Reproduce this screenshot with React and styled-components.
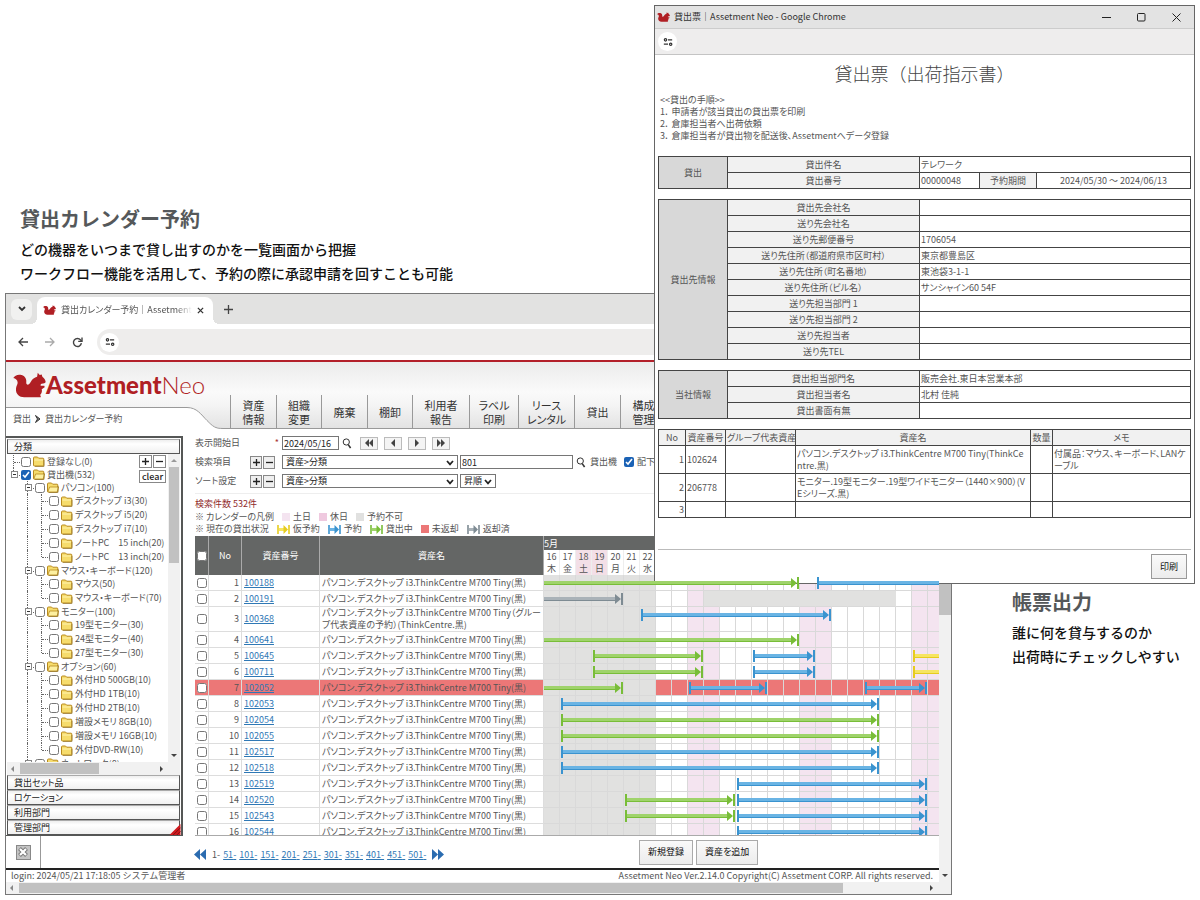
import React from "react";
import styled, { createGlobalStyle, css } from "styled-components";

const TREE = [
  { name: "登録なし(0)", depth: 0 },
  { name: "貸出機(532)", depth: 0, branch: true, checked: true, last: true },
  { name: "パソコン(100)", depth: 1, branch: true },
  { name: "デスクトップ i3(30)", depth: 2 },
  { name: "デスクトップ i5(20)", depth: 2 },
  { name: "デスクトップ i7(10)", depth: 2 },
  { name: "ノートPC　15 inch(20)", depth: 2 },
  { name: "ノートPC　13 inch(20)", depth: 2, last: true },
  { name: "マウス・キーボード(120)", depth: 1, branch: true },
  { name: "マウス(50)", depth: 2 },
  { name: "マウス・キーボード(70)", depth: 2, last: true },
  { name: "モニター(100)", depth: 1, branch: true },
  { name: "19型モニター(30)", depth: 2 },
  { name: "24型モニター(40)", depth: 2 },
  { name: "27型モニター(30)", depth: 2, last: true },
  { name: "オプション(60)", depth: 1, branch: true },
  { name: "外付HD 500GB(10)", depth: 2 },
  { name: "外付HD 1TB(10)", depth: 2 },
  { name: "外付HD 2TB(10)", depth: 2 },
  { name: "増設メモリ 8GB(10)", depth: 2 },
  { name: "増設メモリ 16GB(10)", depth: 2 },
  { name: "外付DVD-RW(10)", depth: 2, last: true },
  { name: "ネットワーク(8)", depth: 1, branch: true },
];

const MENUS = [
  { lines: ["資産", "情報"], width: 46 },
  { lines: ["組織", "変更"], width: 45 },
  { lines: ["廃棄"], width: 46 },
  { lines: ["棚卸"], width: 45 },
  { lines: ["利用者", "報告"], width: 57 },
  { lines: ["ラベル", "印刷"], width: 49 },
  { lines: ["リース", "レンタル"], width: 56 },
  { lines: ["貸出"], width: 46 },
  { lines: ["構成", "管理"], width: 46 },
];

const DAYS = Array.from({ length: 25 }, (_, i) => ({
  date: i < 16 ? 16 + i : i - 15,
  week: "木金土日月火水"[i % 7],
  weekend: i % 7 === 2 || i % 7 === 3,
  past: i < 7,
}));

const ASSET = "パソコン.デスクトップ i3.ThinkCentre M700 Tiny(黒)";

// bars: [kind, first day, last day], days counted from the start of the calendar
const ROWS = [
  { id: "100188", bars: [["lent", -1, 16], ["booked", 17, 99]] },
  { id: "100191", bars: [["returned", -1, 5]], blocked: [10, 22] },
  {
    id: "100368",
    name: "パソコン.デスクトップ i3.ThinkCentre M700 Tiny（グループ代表資産の予約）(ThinkCentre.黒)",
    tall: true,
    bars: [["booked", 6, 18]],
  },
  { id: "100641", bars: [["lent", -1, 16]] },
  { id: "100645", bars: [["lent", 3, 10], ["booked", 13, 17], ["tentative", 23, 99]] },
  { id: "100711", bars: [["lent", 3, 10], ["booked", 13, 17], ["tentative", 23, 99]] },
  { id: "102052", late: true, bars: [["lent", -1, 5], ["booked", 9, 14], ["booked", 20, 24]] },
  { id: "102053", bars: [["booked", 1, 21]] },
  { id: "102054", bars: [["lent", 1, 21]] },
  { id: "102055", bars: [["lent", 1, 21]] },
  { id: "102517", bars: [["booked", 1, 21]] },
  { id: "102518", bars: [["booked", 1, 21]] },
  { id: "102519", bars: [["booked", 12, 24]] },
  { id: "102520", bars: [["lent", 5, 12], ["booked", 12, 24]] },
  { id: "102543", bars: [["lent", 5, 12], ["booked", 12, 24]] },
  { id: "102544", bars: [["booked", 12, 24]] },
];

const COLORS = {
  booked: ["#3a93cf", "#6ab4e4"],
  lent: ["#78bd38", "#9fd36b"],
  tentative: ["#e6cc1e", "#f6e561"],
  returned: ["#7e8b93", "#a9b2b8"],
};

const SHIP_TO = [
  ["貸出先会社名", ""],
  ["送り先会社名", ""],
  ["送り先郵便番号", "1706054"],
  ["送り先住所（都道府県市区町村）", "東京都豊島区"],
  ["送り先住所（町名番地）", "東池袋3-1-1"],
  ["送り先住所（ビル名）", "サンシャイン60 54F"],
  ["送り先担当部門 1", ""],
  ["送り先担当部門 2", ""],
  ["送り先担当者", ""],
  ["送り先TEL", ""],
];

const OUR_SIDE = [
  ["貸出担当部門名", "販売会社.東日本営業本部"],
  ["貸出担当者名", "北村 佳純"],
  ["貸出書面有無", ""],
];

function Squirrel() {
  return (
    <svg viewBox="0 0 100 76" width="100%" height="100%" aria-hidden="true">
      <path
        fill="#b01f24"
        d="M1 17C5 9 15 5 26 8C38 12 42 22 40 33C43 40 49 37 54 28C59 19 65 16 73 13L75 1L81 8L87 6L89 13C95 17 99 24 99 29C98 33 93 34 87 34C84 35 83 37 84 40L95 40L96 45L87 51C89 57 87 64 82 68L84 71V75H34C19 75 8 65 9 50C9 41 15 37 14 30C13 22 8 19 1 17Z"
      />
    </svg>
  );
}

function SettingsGlyph() {
  return (
    <svg viewBox="0 0 12 12" width="10" height="10" fill="none" stroke="#333" strokeWidth="1.5" aria-hidden="true">
      <circle cx="3" cy="3.4" r="1.4" />
      <path d="M6 3.4h5M1 8.6h5" />
      <circle cx="9.2" cy="8.6" r="1.4" />
    </svg>
  );
}

function Folder({ open }) {
  return (
    <svg viewBox="0 0 12 11" width="12" height="11" aria-hidden="true">
      <path d="M.5 2Q.5 1 1.5 1h3l1.2 1.2h4.3q.8 0 .8.8v6.2q0 .8-.8.8H1.4Q.5 10 .5 9z" fill="#f6dc6c" stroke="#b98a1e" />
      {open && <path d="M.8 10L2.6 5h9l-1.400 5z" fill="#fdf0a0" stroke="#b98a1e" strokeWidth=".8" />}
      {!open && <path d="M1.4 4h8.6" stroke="#fff3b0" />}
      <path d="M2 10.5h9V4" stroke="#8a6a1d" strokeOpacity=".6" fill="none" />
    </svg>
  );
}

function SearchGlyph() {
  return (
    <svg viewBox="0 0 10 11" width="10" height="11" fill="none" stroke="#333" aria-hidden="true">
      <circle cx="4.3" cy="4" r="3.1" />
      <path d="M6.2 6.6L8.6 10" strokeWidth="1.6" />
    </svg>
  );
}

function Arrow({ points, width = 8, height = 8, color = "#444" }) {
  return (
    <svg viewBox={`0 0 ${width} ${height}`} width={width} height={height} fill={color} aria-hidden="true">
      <path d={points} />
    </svg>
  );
}

function Chevron() {
  return (
    <ChevronIcon viewBox="0 0 8 6" aria-hidden="true">
      <path d="M1 1l3 3.4L7 1" fill="none" stroke="#222" strokeWidth="1.7" />
    </ChevronIcon>
  );
}

function Span({ kind, from, to }) {
  const [dark, light] = COLORS[kind];
  const left = from < 0 ? 0 : from * 16 + 1;
  return (
    <Bar style={{ left, width: to * 16 - 1 - left }}>
      {from >= 0 && <Cap $dark={dark} />}
      <Shaft $dark={dark} $light={light} />
      <Arrow points="M0 0l6 5-6 5z" width={6} height={10} color={dark} />
      <Cap $dark={dark} />
    </Bar>
  );
}

function LegendArrow({ kind, children }) {
  const [dark, light] = COLORS[kind];
  return (
    <LegendItem>
      <svg viewBox="0 0 13 9" width="13" height="9" aria-hidden="true">
        <path d="M1 0v9M12 0v9" stroke={dark} strokeWidth="1.6" />
        <path d="M2 4.5h6" stroke={light} strokeWidth="3" />
        <path d="M6.5 0l4.5 4.5L6.5 9z" fill={dark} />
      </svg>
      {children}
    </LegendItem>
  );
}

function TreeRow({ name, depth, branch, checked, last }) {
  return (
    <Branch $branch={branch || depth === 0}>
      {depth > 0 && <Guide />}
      {depth > 1 && <Guide $line />}
      <Guide $line $tee $last={last}>
        {branch && <Toggle type="button" aria-label={`${name} 開閉`} />}
      </Guide>
      <Check type="checkbox" id={`t-${name}`} defaultChecked={checked} />
      <Folder open={branch} />
      <label htmlFor={`t-${name}`}>{name}</label>
    </Branch>
  );
}

function Calendar({ row }) {
  return DAYS.map((day, i) => {
    const blocked = row.blocked && i >= row.blocked[0] && i < row.blocked[1];
    return (
      <Day key={i} $past={day.past || blocked} $weekend={day.weekend} $late={row.late} $plain={blocked}>
        {i === 0 && row.bars.map(([kind, from, to]) => <Span key={from} kind={kind} from={from} to={to} />)}
      </Day>
    );
  });
}

function AssetTable() {
  return (
    <TableArea>
      <Assets>
        <colgroup>
          <col width="14" />
          <col width="33" />
          <col width="78" />
          <col width="224" />
          {DAYS.map((_, i) => (
            <col key={i} width="16" />
          ))}
        </colgroup>
        <thead>
          <tr>
            <Head rowSpan="2">
              <Check type="checkbox" aria-label="すべて選択" />
            </Head>
            <Head rowSpan="2">No</Head>
            <Head rowSpan="2">資産番号</Head>
            <Head rowSpan="2">資産名</Head>
            <Month colSpan="25">5月</Month>
          </tr>
          <tr>
            {DAYS.map(({ date, week, weekend }, i) => (
              <DayHead key={i} $weekend={weekend}>
                {date}
                <br />
                {week}
              </DayHead>
            ))}
          </tr>
        </thead>
        <tbody>
          {ROWS.map((row, i) => (
            <AssetRow key={row.id} $late={row.late} $tall={row.tall}>
              <Cell>
                <Check type="checkbox" aria-label={row.id} />
              </Cell>
              <Cell $right>{i + 1}</Cell>
              <Cell>
                <Link href="#">{row.id}</Link>
              </Cell>
              <Cell>{row.name || ASSET}</Cell>
              <Calendar row={row} />
            </AssetRow>
          ))}
        </tbody>
      </Assets>
    </TableArea>
  );
}

function Filters() {
  return (
    <FilterForm>
      <FilterRow>
        <FilterLabel htmlFor="start">表示開始日</FilterLabel>
        <Required>*</Required>
        <Field id="start" $width={57} defaultValue="2024/05/16" />
        <IconButton type="button" aria-label="日付検索">
          <SearchGlyph />
        </IconButton>
        <Steps>
          <Step type="button" aria-label="最初">
            <Arrow points="M4 0v8L0 4zM8 0v8L4 4z" />
          </Step>
          <Step type="button" aria-label="前">
            <Arrow points="M6 0v8L2 4z" />
          </Step>
          <Step type="button" aria-label="次">
            <Arrow points="M2 0v8l4-4z" />
          </Step>
          <Step type="button" aria-label="最後">
            <Arrow points="M0 0v8l4-4zM4 0v8l4-4z" />
          </Step>
        </Steps>
      </FilterRow>
      <FilterRow>
        <FilterLabel htmlFor="item">検索項目</FilterLabel>
        <PlusMinus />
        <Picker $width={176}>
          <select id="item">
            <option>資産&gt;分類</option>
          </select>
          <Chevron />
        </Picker>
        <Field aria-label="検索値" $width={113} $joined defaultValue="801" />
        <IconButton type="button" aria-label="検索">
          <SearchGlyph />
        </IconButton>
        <span>貸出機</span>
        <SubLabel>
          <Check type="checkbox" defaultChecked />
          配下も含む
        </SubLabel>
      </FilterRow>
      <FilterRow>
        <FilterLabel htmlFor="sort">ソート設定</FilterLabel>
        <PlusMinus />
        <Picker $width={176}>
          <select id="sort">
            <option>資産&gt;分類</option>
          </select>
          <Chevron />
        </Picker>
        <Picker $width={36} $joined>
          <select aria-label="並び順">
            <option>昇順</option>
          </select>
          <Chevron />
        </Picker>
      </FilterRow>
    </FilterForm>
  );
}

function PlusMinus() {
  return (
    <Signs>
      <Sign type="button" aria-label="追加">
        <svg viewBox="0 0 8 8" aria-hidden="true">
          <path d="M4 0v8M0 4h8" />
        </svg>
      </Sign>
      <Sign type="button" aria-label="削除">
        <svg viewBox="0 0 8 8" aria-hidden="true">
          <path d="M0 4h8" />
        </svg>
      </Sign>
    </Signs>
  );
}

function Sidebar() {
  return (
    <SidePanel>
      <Accordion type="button">分類</Accordion>
      <TreeBox>
        <TreeMain>
          <Tree>
            {TREE.map((node) => (
              <TreeRow key={node.name} {...node} />
            ))}
          </Tree>
          <TreeTools>
            <PlusMinus />
            <Clear type="button">clear</Clear>
          </TreeTools>
          <TreeScroll>
            <Arrow points="M1 6h6L4 3z" color="#999" />
            <Thumb $height={96} />
            <Arrow points="M1 2h6L4 5z" />
          </TreeScroll>
        </TreeMain>
        <ScrollX>
          <Arrow points="M5 1v6L2 4z" color="#888" />
          <Thumb $width={79} />
          <Arrow points="M3 1v6l3-3z" />
        </ScrollX>
      </TreeBox>
      <Accordion type="button">貸出セット品</Accordion>
      <Accordion type="button">ロケーション</Accordion>
      <Accordion type="button">利用部門</Accordion>
      <Accordion type="button">管理部門</Accordion>
      <Corner viewBox="0 0 12 12" aria-hidden="true">
        <path d="M12 0v12H0z" fill="#d01a1f" />
        <path d="M4 12l8-8M8 12l4-4" stroke="#7d0d10" />
      </Corner>
    </SidePanel>
  );
}

function MainWindow() {
  return (
    <Browser>
      <TabStrip>
        <TabMenu type="button" aria-label="タブを検索">
          <svg viewBox="0 0 8 6" width="8" height="6" aria-hidden="true">
            <path d="M1 1l3 3 3-3" fill="none" stroke="#333" strokeWidth="1.8" />
          </svg>
        </TabMenu>
        <Tab>
          <Favicon>
            <Squirrel />
          </Favicon>
          <TabTitle>貸出カレンダー予約｜Assetment Neo</TabTitle>
          <Plain type="button" aria-label="タブを閉じる">
            <svg viewBox="0 0 8 8" width="7" height="7" aria-hidden="true">
              <path d="M1 1l6 6M7 1L1 7" stroke="#333" strokeWidth="1.5" />
            </svg>
          </Plain>
        </Tab>
        <Plain type="button" aria-label="新しいタブ">
          <svg viewBox="0 0 9 9" width="9" height="9" aria-hidden="true">
            <path d="M4.5 0v9M0 4.5h9" stroke="#444" strokeWidth="1.3" />
          </svg>
        </Plain>
      </TabStrip>
      <Toolbar>
        <Plain type="button" aria-label="戻る">
          <svg viewBox="0 0 10 10" width="10" height="10" fill="none" stroke="#444" strokeWidth="1.3" aria-hidden="true">
            <path d="M10 5H1M5 1L1 5l4 4" />
          </svg>
        </Plain>
        <Plain type="button" aria-label="進む">
          <svg viewBox="0 0 10 10" width="10" height="10" fill="none" stroke="#aaa" strokeWidth="1.3" aria-hidden="true">
            <path d="M0 5h9M5 1l4 4-4 4" />
          </svg>
        </Plain>
        <Plain type="button" aria-label="再読み込み">
          <svg viewBox="0 0 11 11" width="11" height="11" fill="none" stroke="#444" strokeWidth="1.4" aria-hidden="true">
            <path d="M9.4 6.2A4 4 0 1 1 8.6 3L9.8 4.2" />
            <path d="M10 .6v3.8H6.2" />
          </svg>
        </Plain>
        <Address>
          <Round>
            <SettingsGlyph />
          </Round>
        </Address>
      </Toolbar>
      <Viewport>
        <Site>
          <Banner>
            <BannerLeft>
              <Logo>
                <LogoMark>
                  <Squirrel />
                </LogoMark>
                <b>Assetment</b>
                <i>Neo</i>
              </Logo>
              <Crumbs>
                貸出
                <svg viewBox="0 0 6 8" width="6" height="8" aria-hidden="true">
                  <path d="M.5 .5L5 4L.5 7.500L2.5 4z" fill="#888" stroke="#333" />
                </svg>
                貸出カレンダー予約
              </Crumbs>
            </BannerLeft>
            <Curve viewBox="0 0 40 22" preserveAspectRatio="none" aria-hidden="true">
              <path d="M0 22V0c10 0 14 7 20 13s8 8 16 8h4v1z" fill="#fff" />
              <path d="M0 .5c10 0 14 7 20 13s8 8 16 8h4" fill="none" stroke="#999" />
            </Curve>
            <Menu>
              {MENUS.map(({ lines, width }) => (
                <MenuItem key={lines[0]} href="#" $width={width}>
                  {lines.map((line) => (
                    <span key={line}>{line}</span>
                  ))}
                </MenuItem>
              ))}
            </Menu>
          </Banner>
          <Body>
            <Sidebar />
            <Pane>
              <Filters />
              <Legends>
                <Count>検索件数 532件</Count>
                <LegendLine>
                  <span>※ カレンダーの凡例</span>
                  <LegendItem>
                    <Swatch $color="#f4e4f0" />
                    土日
                  </LegendItem>
                  <LegendItem>
                    <Swatch $color="#efc9df" />
                    休日
                  </LegendItem>
                  <LegendItem>
                    <Swatch $color="#e1e1e0" />
                    予約不可
                  </LegendItem>
                </LegendLine>
                <LegendLine>
                  <span>※ 現在の貸出状況</span>
                  <LegendArrow kind="tentative">仮予約</LegendArrow>
                  <LegendArrow kind="booked">予約</LegendArrow>
                  <LegendArrow kind="lent">貸出中</LegendArrow>
                  <LegendItem>
                    <Swatch $color="#ec7777" />
                    未返却
                  </LegendItem>
                  <LegendArrow kind="returned">返却済</LegendArrow>
                </LegendLine>
              </Legends>
              <AssetTable />
            </Pane>
          </Body>
          <Actions>
            <CloseBox>
              <CloseButton type="button" aria-label="閉じる">
                <svg viewBox="0 0 10 10" width="10" height="10" aria-hidden="true">
                  <path d="M1.500 1.500l7 7M8.500 1.500L1.500 8.500" stroke="#777" strokeWidth="4" />
                  <path d="M2 2l6 6M8 2L2 8" stroke="#fff" strokeWidth="2.200" />
                </svg>
              </CloseButton>
            </CloseBox>
            <Pager aria-label="ページ">
              <Arrow points="M6 0v11L0 5.5zM12 0v11L6 5.5z" width={12} height={11} color="#2b6cb0" />
              <span>1-</span>
              {[51, 101, 151, 201, 251, 301, 351, 401, 451, 501].map((n) => (
                <Link key={n} href="#">
                  {n}-
                </Link>
              ))}
              <Arrow points="M0 0v11l6-5.5zM6 0v11l6-5.5z" width={12} height={11} color="#2b6cb0" />
            </Pager>
            <Buttons>
              <Push type="button">新規登録</Push>
              <Push type="button">資産を追加</Push>
            </Buttons>
          </Actions>
          <Status>
            <span>login: 2024/05/21 17:18:05 システム管理者</span>
            <span>Assetment Neo Ver.2.14.0 Copyright(C) Assetment CORP. All rights reserved.</span>
          </Status>
        </Site>
        <ScrollY>
          <Thumb $height={253} />
          <Arrow points="M1 2h6L4 5z" />
        </ScrollY>
      </Viewport>
      <ScrollX $wide>
        <Arrow points="M5 1v6L2 4z" color="#888" />
        <Thumb $width={824} />
        <Arrow points="M3 1v6l3-3z" />
      </ScrollX>
    </Browser>
  );
}

function InfoTable({ title, rows }) {
  return (
    <Sheet>
      <colgroup>
        <col width="69" />
        <col width="192" />
        <col />
      </colgroup>
      <tbody>
        {rows.map(([label, value], i) => (
          <tr key={label}>
            {i === 0 && (
              <GroupHead rowSpan={rows.length} scope="rowgroup">
                {title}
              </GroupHead>
            )}
            <LabelHead scope="row">{label}</LabelHead>
            <td>{value}</td>
          </tr>
        ))}
      </tbody>
    </Sheet>
  );
}

function SlipWindow() {
  return (
    <Popup>
      <TitleBar>
        <Favicon>
          <Squirrel />
        </Favicon>
        <span>貸出票｜Assetment Neo - Google Chrome</span>
        <Controls>
          <Plain type="button" aria-label="最小化">
            <svg viewBox="0 0 9 9" width="9" height="9" stroke="#222" aria-hidden="true">
              <path d="M0 4.5h9" />
            </svg>
          </Plain>
          <Plain type="button" aria-label="最大化">
            <svg viewBox="0 0 9 9" width="9" height="9" stroke="#222" fill="none" aria-hidden="true">
              <rect x=".5" y=".5" width="7.5" height="7.5" rx="1" />
            </svg>
          </Plain>
          <Plain type="button" aria-label="閉じる">
            <svg viewBox="0 0 9 9" width="9" height="9" stroke="#222" aria-hidden="true">
              <path d="M.5.5l8 8M8.5.5l-8 8" />
            </svg>
          </Plain>
        </Controls>
      </TitleBar>
      <SubBar>
        <Round>
          <SettingsGlyph />
        </Round>
      </SubBar>
      <Slip>
        <SlipTitle>貸出票（出荷指示書）</SlipTitle>
        <Guidance>
          &lt;&lt;貸出の手順&gt;&gt;
          <br />
          1． 申請者が該当貸出の貸出票を印刷
          <br />
          2． 倉庫担当者へ出荷依頼
          <br />
          3． 倉庫担当者が貸出物を配送後、Assetmentへデータ登録
        </Guidance>
        <Sheet>
          <colgroup>
            <col width="69" />
            <col width="192" />
            <col width="60" />
            <col width="57" />
            <col />
          </colgroup>
          <tbody>
            <tr>
              <GroupHead rowSpan="2" scope="rowgroup">
                貸出
              </GroupHead>
              <LabelHead scope="row">貸出件名</LabelHead>
              <td colSpan="3">テレワーク</td>
            </tr>
            <tr>
              <LabelHead scope="row">貸出番号</LabelHead>
              <td>00000048</td>
              <LabelHead scope="row">予約期間</LabelHead>
              <Centered>2024/05/30 ～ 2024/06/13</Centered>
            </tr>
          </tbody>
        </Sheet>
        <InfoTable title="貸出先情報" rows={SHIP_TO} />
        <InfoTable title="当社情報" rows={OUR_SIDE} />
        <Sheet>
          <colgroup>
            <col width="27" />
            <col width="40" />
            <col width="70" />
            <col />
            <col width="22" />
            <col width="138" />
          </colgroup>
          <thead>
            <tr>
              {["No", "資産番号", "グループ代表資産", "資産名", "数量", "メモ"].map((name) => (
                <LabelHead key={name} scope="col">
                  {name}
                </LabelHead>
              ))}
            </tr>
          </thead>
          <tbody>
            <tr>
              <Numeric>1</Numeric>
              <td>102624</td>
              <td />
              <Wrapping>パソコン.デスクトップ i3.ThinkCentre M700 Tiny(ThinkCentre.黒)</Wrapping>
              <td />
              <Wrapping>付属品：マウス、キーボード、LANケーブル</Wrapping>
            </tr>
            <tr>
              <Numeric>2</Numeric>
              <td>206778</td>
              <td />
              <Wrapping>モニター.19型モニター.19型ワイドモニター（1440×900）(VEシリーズ.黒)</Wrapping>
              <td />
              <td />
            </tr>
            <tr>
              <Numeric>3</Numeric>
              <td />
              <td />
              <td />
              <td />
              <td />
            </tr>
          </tbody>
        </Sheet>
        <SlipFooter>
          <Push type="button">印刷</Push>
        </SlipFooter>
      </Slip>
    </Popup>
  );
}

export default function App() {
  return (
    <>
      <GlobalStyle />
      <Page>
        <Feature>
          <Intro>
            <Heading>貸出カレンダー予約</Heading>
            <p>
              どの機器をいつまで貸し出すのかを一覧画面から把握
              <br />
              ワークフロー機能を活用して、予約の際に承認申請を回すことも可能
            </p>
          </Intro>
          <MainWindow />
        </Feature>
        <Aside>
          <Heading>帳票出力</Heading>
          <p>
            誰に何を貸与するのか
            <br />
            出荷時にチェックしやすい
          </p>
        </Aside>
        <SlipWindow />
      </Page>
    </>
  );
}

const GlobalStyle = createGlobalStyle`
  * {
    box-sizing: border-box;
  }

  body {
    margin: 0;
    background: #fff;
    color: #555;
    font-family: "Noto Sans CJK JP", "Open Sans", sans-serif;
    font-size: 9px;
    line-height: 12px;
  }

  button, input, select {
    font: inherit;
    color: inherit;
    margin: 0;
    padding: 0;
  }

  svg {
    display: block;
    flex: none;
  }

  p {
    margin: 0;
  }
`;

const Page = styled.main`
  position: relative;
  display: grid;
  grid-template-columns: minmax(0, 1fr) 188px;
  column-gap: 60px;
  height: 100vh;
  min-height: 700px;
  overflow: hidden;
`;

const Feature = styled.section`
  display: flex;
  flex-direction: column;
  min-height: 0;
  padding: 0 0 5px 5px;
`;

const Intro = styled.div`
  padding: 204px 0 8px 15px;
  color: #111;
  font-size: 14px;
  font-weight: 500;
  line-height: 24px;
`;

const Aside = styled.section`
  padding-top: 587px;
  color: #111;
  font-size: 14px;
  font-weight: 500;
  line-height: 24px;
  white-space: nowrap;
`;

const Heading = styled.h2`
  margin: 0 0 3px;
  color: #55585a;
  font-size: 20px;
  font-weight: 700;
  line-height: 30px;
`;

/* windows */

const Browser = styled.div`
  flex: 1;
  display: flex;
  flex-direction: column;
  min-height: 0;
  border: 1px solid #777;
  background: #fff;
  overflow: hidden;
`;

const Popup = styled.div`
  position: absolute;
  top: 5px;
  right: 5px;
  width: 541px;
  display: flex;
  flex-direction: column;
  border: 1px solid #666;
  background: #fff;
`;

const Plain = styled.button`
  border: 0;
  background: none;
`;

const TabStrip = styled.div`
  display: flex;
  align-items: center;
  height: 30px;
  padding-left: 5px;
  background: #e2e2e1;

  > ${Plain} {
    margin-left: 11px;
  }
`;

const TabMenu = styled.button`
  display: grid;
  place-items: center;
  width: 21px;
  height: 21px;
  margin-right: 5px;
  border: 0;
  border-radius: 6px;
  background: #f1f1f0;
`;

const Tab = styled.div`
  position: relative;
  display: flex;
  align-items: center;
  align-self: flex-end;
  gap: 5px;
  width: 176px;
  height: 27px;
  padding: 0 9px 1px 6px;
  border-radius: 8px 8px 0 0;
  background: #fff;

  &::before,
  &::after {
    content: "";
    position: absolute;
    bottom: 0;
    width: 6px;
    height: 6px;
  }

  &::before {
    right: 100%;
    background: radial-gradient(circle at 0 0, transparent 6px, #fff 6px);
  }

  &::after {
    left: 100%;
    background: radial-gradient(circle at 100% 0, transparent 6px, #fff 6px);
  }
`;

const Favicon = styled.span`
  width: 13px;
  height: 10px;
`;

const TabTitle = styled.span`
  flex: 1;
  overflow: hidden;
  white-space: nowrap;
  font-feature-settings: "palt";
  mask-image: linear-gradient(to right, #000 88%, transparent);
`;

const Toolbar = styled.div`
  display: flex;
  align-items: center;
  gap: 17px;
  height: 36px;
  padding-left: 12px;
`;

const Address = styled.div`
  flex: 1;
  display: flex;
  align-items: center;
  height: 26px;
  margin-left: -3px;
  padding-left: 3px;
  border-radius: 13px 0 0 13px;
  background: #eeedec;
`;

const Round = styled.span`
  display: grid;
  place-items: center;
  width: 19px;
  height: 19px;
  border-radius: 50%;
  background: #fff;
`;

const Viewport = styled.div`
  flex: 1;
  display: flex;
  min-height: 0;
  border-top: 2px solid #b3202a;
`;

const Site = styled.div`
  flex: 1;
  display: flex;
  flex-direction: column;
  min-width: 0;
  overflow: hidden;
`;

const Thumb = styled.span`
  flex: none;
  width: ${(props) => (props.$width ? `${props.$width}px` : "100%")};
  height: ${(props) => (props.$height ? `${props.$height}px` : "100%")};
  background: #c1c1c1;
`;

const ScrollY = styled.div`
  display: flex;
  flex-direction: column;
  align-items: center;
  justify-content: space-between;
  width: 12px;
  padding-bottom: 2px;
  background: #f1f1f1;
`;

const ScrollX = styled.div`
  display: flex;
  align-items: center;
  gap: 3px;
  height: ${(props) => (props.$wide ? 12 : 13)}px;
  padding: 1px ${(props) => (props.$wide ? 16 : 15)}px 1px 2px;
  background: #f1f1f1;

  > :last-child {
    margin-left: auto;
  }
`;

/* site banner */

const Banner = styled.header`
  flex: none;
  display: flex;
  align-items: flex-end;
  height: 67px;
  background: linear-gradient(#ebebeb, #fafafa 45%, #f4f4f4 65%, #e2e2e2);
`;

const BannerLeft = styled.div`
  display: flex;
  flex-direction: column;
  align-self: stretch;
  width: 181px;
`;

const Logo = styled.div`
  flex: 1;
  display: flex;
  align-items: center;
  padding-left: 7px;
  color: #b01f24;
  font-family: Lato, "Open Sans", sans-serif;
  font-size: 24px;
  line-height: 24px;
  white-space: nowrap;

  b {
    font-weight: 900;
  }

  i {
    font-style: normal;
    font-weight: 300;
  }
`;

const LogoMark = styled.span`
  flex: none;
  width: 33px;
  height: 26px;
`;

const Crumbs = styled.div`
  display: flex;
  align-items: center;
  gap: 4px;
  height: 22px;
  padding-left: 7px;
  border-top: 1px solid #999;
  background: #fff;
  font-feature-settings: "palt";
`;

const Curve = styled.svg`
  width: 40px;
  height: 22px;
`;

const Menu = styled.nav`
  flex: 1;
  display: flex;
  align-self: stretch;
  align-items: flex-end;
  padding-left: 3px;
  border-bottom: 1px solid #999;
`;

const MenuItem = styled.a`
  flex: none;
  display: flex;
  flex-direction: column;
  align-items: center;
  justify-content: center;
  width: ${(props) => props.$width}px;
  height: 33px;
  border-left: 1px solid #999;
  color: #333;
  font-size: 11px;
  font-feature-settings: "palt";
  line-height: 14px;
  text-decoration: none;
`;

const Body = styled.div`
  flex: 1;
  display: flex;
  min-height: 0;
`;

/* controls */

const Check = styled.input`
  flex: none;
  width: 10px;
  height: 10px;
  margin: 0;
  accent-color: #1b62b5;
`;

const Signs = styled.span`
  display: flex;
  gap: 1px;
`;

const Sign = styled.button`
  display: grid;
  place-items: center;
  width: 12px;
  height: 13px;
  border: 1px solid #888;
  background: #efefef;

  svg {
    width: 7px;
    height: 7px;
    stroke: #222;
    stroke-width: 1.5;
  }
`;

const Push = styled.button`
  height: 25px;
  padding: 0 8px;
  border: 1px solid #aaa;
  background: linear-gradient(#fafafa, #ececec);
  color: #111;
  font-feature-settings: "palt";
`;

const Link = styled.a`
  color: #2f78b5;
`;

const ChevronIcon = styled.svg`
  position: absolute;
  top: 4px;
  right: 3px;
  width: 8px;
  height: 6px;
  pointer-events: none;
`;

/* sidebar */

const SidePanel = styled.aside`
  position: relative;
  flex: none;
  display: flex;
  flex-direction: column;
  width: 177px;
  margin-top: 7px;
  padding: 1px 1px 0;
  border: 2px solid #555756;
  border-width: 2px 2px 1px 0;
  font-feature-settings: "palt";
`;

const Accordion = styled.button`
  flex: none;
  height: 15px;
  padding-left: 6px;
  overflow: hidden;
  border: 1px solid #555;
  border-top-color: #aaa;
  background: linear-gradient(#eee, #fff 30%, #f0f0f0);
  color: #222;
  line-height: 13px;
  text-align: left;
`;

const TreeBox = styled.div`
  flex: 1;
  display: flex;
  flex-direction: column;
  min-height: 0;
`;

const TreeMain = styled.div`
  position: relative;
  flex: 1;
  display: flex;
  min-height: 0;
  overflow: hidden;
`;

const Tree = styled.ul`
  flex: 1;
  margin: 0;
  padding: 1px 0 0;
  list-style: none;
`;

const TreeTools = styled.div`
  position: absolute;
  top: 1px;
  right: 14px;
  display: flex;
  flex-direction: column;
  gap: 2px;
  background: #fff;

  ${Sign} {
    width: 13px;
    background: #fff;
  }
`;

const Clear = styled.button`
  height: 13px;
  border: 1px solid #888;
  background: #fff;
  color: #222;
  line-height: 10px;
  font-weight: 500;
`;

const TreeScroll = styled.div`
  display: flex;
  flex-direction: column;
  align-items: center;
  gap: 3px;
  width: 12px;
  padding: 2px 1px;
  background: #f1f1f1;

  > :last-child {
    margin-top: auto;
  }
`;

const Branch = styled.li`
  display: flex;
  align-items: center;
  gap: 2px;
  height: ${(props) => (props.$branch ? 13 : 14)}px;
  white-space: nowrap;
`;

const Guide = styled.span`
  position: relative;
  flex: none;
  display: grid;
  place-items: center;
  width: 14px;
  height: 100%;
  margin-right: -2px;

  &::before {
    content: "";
    position: absolute;
    top: 0;
    left: 6px;
    height: ${(props) => (props.$last ? "50%" : "100%")};
    border-left: ${(props) => (props.$line ? "1px dotted #666" : "0")};
  }

  &::after {
    content: "";
    position: absolute;
    top: 50%;
    left: 7px;
    width: 6px;
    border-top: ${(props) => (props.$tee ? "1px dotted #666" : "0")};
  }
`;

const Toggle = styled.button`
  position: relative;
  z-index: 1;
  width: 7px;
  height: 7px;
  border: 1px solid #888;
  background: linear-gradient(#333, #333) center / 3px 1px no-repeat #fff;
`;

const Corner = styled.svg`
  position: absolute;
  right: 0;
  bottom: 0;
  width: 12px;
  height: 11px;
`;

/* search pane */

const Pane = styled.div`
  flex: 1;
  display: flex;
  flex-direction: column;
  min-width: 0;
  padding-left: 12px;
`;

const FilterForm = styled.form`
  display: flex;
  flex-direction: column;
  gap: 5px;
  padding: 7px 0 5px;
  border-bottom: 1px solid #eee;
`;

const FilterRow = styled.div`
  display: flex;
  align-items: center;
  height: 14px;
  font-feature-settings: "palt";
  white-space: nowrap;

  > ${Signs} {
    width: 32px;
  }
`;

const FilterLabel = styled.label`
  width: 55px;
`;

const Required = styled.span`
  width: 32px;
  padding-right: 3px;
  color: #a33;
  text-align: right;
`;

const fieldBox = css`
  width: ${(props) => props.$width}px;
  height: 14px;
  margin-left: ${(props) => (props.$joined ? 2 : 0)}px;
  border: 1px solid #767676;
  background: #fff;
  color: #222;
`;

const Field = styled.input`
  ${fieldBox}
  padding-left: 1px;
`;

const Picker = styled.span`
  ${fieldBox}
  position: relative;

  select {
    display: block;
    width: 100%;
    height: 12px;
    padding-left: 3px;
    border: 0;
    appearance: none;
    background: none;
  }
`;

const IconButton = styled(Plain)`
  margin: 0 4px 0 3px;
`;

const Steps = styled.span`
  display: flex;
  gap: 6px;
  margin-left: 4px;
`;

const Step = styled.button`
  display: grid;
  place-items: center;
  width: 18px;
  height: 13px;
  border: 1px solid #bbb;
  background: #f4f4f4;
`;

const SubLabel = styled.label`
  display: flex;
  align-items: center;
  gap: 3px;
  margin-left: 7px;
`;

const Legends = styled.div`
  padding-top: 4px;
`;

const Count = styled.p`
  margin-bottom: 1px;
  color: #8f2a2a;
`;

const LegendLine = styled.div`
  display: flex;
  gap: 8px;
  font-feature-settings: "palt";
  white-space: nowrap;
`;

const LegendItem = styled.span`
  display: flex;
  align-items: center;
  gap: 3px;
`;

const Swatch = styled.span`
  width: 8px;
  height: 8px;
  background: ${(props) => props.$color};
`;

const TableArea = styled.div`
  flex: 1;
  min-height: 0;
  margin-top: 1px;
  overflow: hidden;
  border-bottom: 1px solid #aaa;
`;

const Assets = styled.table`
  width: 749px;
  table-layout: fixed;
  border-spacing: 0;
`;

const Head = styled.th`
  padding: 0;
  border-right: 1px solid #aaa;
  background: #646665;
  color: #fff;
  font-weight: 400;

  ${Check} {
    display: block;
    margin: auto;
  }
`;

const Month = styled.th`
  height: 14px;
  padding: 0;
  background: #646665;
  color: #fff;
  font-weight: 400;
  line-height: 13px;
  text-align: left;
`;

const DayHead = styled.th`
  height: 25px;
  padding: 0;
  border-right: 1px solid #eee;
  background: ${(props) => (props.$weekend ? "#f3dfe7" : "#fff")};
  font-weight: 400;
`;

const Cell = styled.td`
  padding: 0 2px;
  border-right: 1px solid #ddd;
  border-bottom: 1px solid #ddd;
  font-feature-settings: "palt";
  text-align: ${(props) => (props.$right ? "right" : "left")};

  ${Check} {
    display: block;
  }
`;

const AssetRow = styled.tr`
  height: ${(props) => (props.$tall ? 25 : 16)}px;
  line-height: ${(props) => (props.$tall ? 12 : 11)}px;

  ${Cell} {
    background: ${(props) => (props.$late ? "#ec7777" : "#fff")};
  }
`;

const dayColor = ({ $past, $weekend, $late }) => {
  if ($past) return "#e1e1e0";
  if ($late) return "#ec7777";
  return $weekend ? "#f4e4f0" : "#fff";
};

const Day = styled.td`
  position: relative;
  padding: 0;
  border-right: 1px solid ${(props) => (props.$plain ? "#e1e1e0" : "#d9d9d9")};
  border-bottom: 1px solid #d9d9d9;
  background: ${dayColor};
  background-clip: padding-box;
`;

const Bar = styled.div`
  position: absolute;
  z-index: 1;
  top: 2px;
  display: flex;
  align-items: center;
  height: 12px;
`;

const Cap = styled.span`
  flex: none;
  width: 2px;
  height: 12px;
  background: ${(props) => props.$dark};
`;

const Shaft = styled.span`
  flex: 1;
  height: 4px;
  border-bottom: 1px solid ${(props) => props.$dark};
  background: ${(props) => props.$light};
`;

/* lower bars */

const Actions = styled.div`
  flex: none;
  display: flex;
  align-items: center;
  height: 34px;
  border-bottom: 2px solid #222;
`;

const CloseBox = styled.div`
  display: grid;
  place-items: center;
  align-self: stretch;
  width: 35px;
  border-right: 1px solid #999;
`;

const CloseButton = styled.button`
  display: grid;
  place-items: center;
  width: 15px;
  height: 15px;
  border: 1px solid #888;
  background: #c4c4c4;
`;

const Pager = styled.nav`
  display: flex;
  align-items: center;
  gap: 3px;
  width: 445px;
  margin-left: 153px;
  padding-top: 5px;

  svg + span {
    margin-left: 3px;
  }

  a + svg {
    margin-left: 3px;
  }
`;

const Buttons = styled.div`
  display: flex;
  gap: 3px;
`;

const Status = styled.footer`
  flex: none;
  display: flex;
  justify-content: space-between;
  height: 12px;
  padding: 0 6px 0 5px;
  overflow: hidden;
  white-space: nowrap;
`;

/* rental slip */

const TitleBar = styled.div`
  display: flex;
  align-items: center;
  gap: 4px;
  height: 23px;
  padding: 0 13px 0 2px;
  border-bottom: 1px solid #ccc;
  background: #e3e3e3;
  color: #333;
`;

const Controls = styled.span`
  display: flex;
  gap: 26px;
  margin-left: auto;
`;

const SubBar = styled.div`
  display: flex;
  align-items: center;
  height: 26px;
  padding-left: 3px;
  border-bottom: 1px solid #c4c4c4;
  background: #eeeded;
`;

const Slip = styled.div`
  display: flex;
  flex-direction: column;
  gap: 10px;
  padding: 3px 3px 4px;
`;

const SlipTitle = styled.h1`
  margin: 0 0 -4px;
  color: #444;
  font-size: 18px;
  font-weight: 300;
  line-height: 30px;
  text-align: center;
`;

const Guidance = styled.p`
  margin-bottom: 4px;
  padding-left: 2px;
  font-feature-settings: "palt";
`;

const Sheet = styled.table`
  width: 100%;
  table-layout: fixed;
  border-collapse: collapse;
  border: 1px solid #444;
  font-feature-settings: "palt";
  line-height: 12px;

  td,
  th {
    height: 16px;
    padding: 0 1px;
    border: 1px solid #444;
    white-space: nowrap;
  }
`;

const GroupHead = styled.th`
  background: #d8d8d8;
  font-weight: 400;
`;

const LabelHead = styled.th`
  background: #f1f1f1;
  font-weight: 400;
`;

const Centered = styled.td`
  text-align: center;
`;

const Numeric = styled.td`
  text-align: right;
`;

const Wrapping = styled.td`
  && {
    height: 28px;
    white-space: normal;
    word-break: break-all;
  }
`;

const SlipFooter = styled.div`
  display: flex;
  justify-content: flex-end;
  margin-top: 21px;
  padding: 4px 4px 0;
  border-top: 1px solid #bbb;

  ${Push} {
    border-color: #999;
  }
`;
